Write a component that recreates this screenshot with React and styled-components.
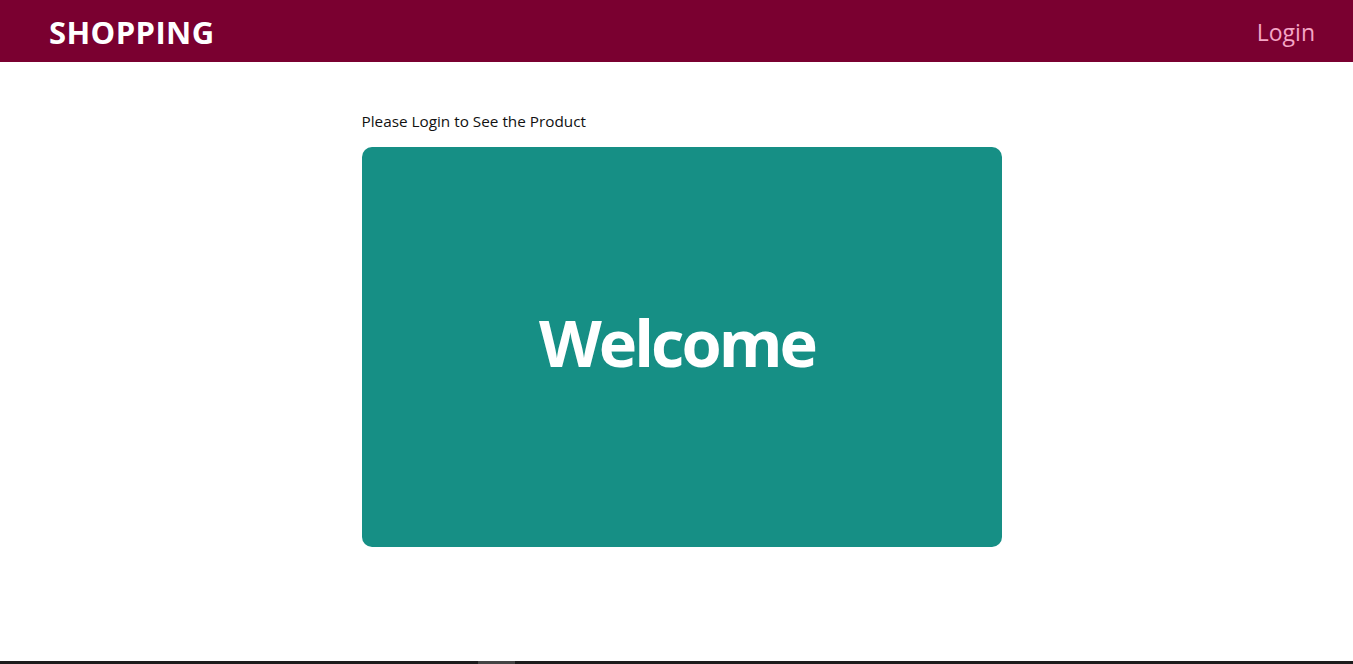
import React from 'react'
import styled, { createGlobalStyle } from 'styled-components'

const GlobalStyle = createGlobalStyle`
  body {
    margin: 0;
    font-family: "Open Sans", "Noto Sans", sans-serif;
    background: #fff;
    color: #111;
  }
`

const Navbar = () => {
  return <Nav>
    <Brand>SHOPPING</Brand>
    <NavLink href='#'>Login</NavLink>
  </Nav>
}

const App = () => {
  return <>
    <GlobalStyle />
    <Navbar />
    <Main>
      <Notice>Please Login to See the Product</Notice>
      <WelcomeCard>
        <h1>Welcome</h1>
      </WelcomeCard>
    </Main>
    <Footer>
      <span />
    </Footer>
  </>
}

const Nav = styled.nav`
  height: 62px;
  background: #7a0030;
  display: flex;
  align-items: center;
  justify-content: space-between;
  padding: 2px 38px 0 49px;
  box-sizing: border-box;
`

const Brand = styled.div`
  color: #fff;
  font-size: 31px;
  font-weight: 700;
  letter-spacing: 0.4px;
`

const NavLink = styled.a`
  color: #f4a6c6;
  font-size: 23px;
  text-decoration: none;
`

const Main = styled.main`
  height: 599px;
  width: 650px;
  margin: 0 auto;
  padding: 49px 0 0 10px;
  box-sizing: border-box;
`

const Notice = styled.p`
  margin: 0 0 16px;
  font-size: 15.3px;
  line-height: 20px;
`

const WelcomeCard = styled.section`
  height: 400px;
  border-radius: 10px;
  background: #168f85;
  display: grid;
  place-items: center;
  padding: 0 9px 10px 0;
  box-sizing: border-box;

  h1 {
    margin: 0;
    color: #fff;
    font-size: 65px;
    font-weight: 700;
    letter-spacing: -3px;
  }
`

const Footer = styled.footer`
  height: 3px;
  background: #1c1c1c;

  span {
    display: block;
    margin-left: 478px;
    width: 37px;
    height: 3px;
    background: #444;
  }
`

export default App
